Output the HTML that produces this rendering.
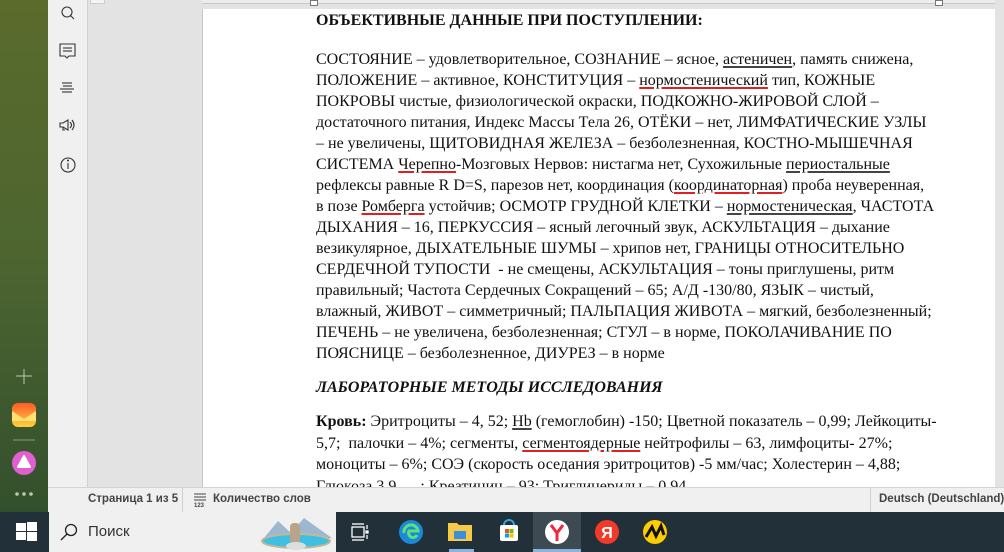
<!DOCTYPE html>
<html><head><meta charset="utf-8"><style>
*{margin:0;padding:0;box-sizing:border-box}
body{width:1004px;height:552px;overflow:hidden;position:relative;background:#e3e3e3;font-family:"Liberation Sans",sans-serif}
.green{position:absolute;left:0;top:0;width:48px;height:512px;background:linear-gradient(180deg,#5a6b2c 0%,#4d6530 50%,#33502d 100%)}
.side{position:absolute;left:48px;top:0;width:40px;height:487px;background:#f0f0f0;border-right:1px solid #d0d0d0}
.gray{position:absolute;left:88px;top:0;width:916px;height:487px;background:#e3e3e3}
.ruler{position:absolute;left:202px;top:0;width:793px;height:4px;background:#ececec;border-bottom:1px solid #c8c8c8}
.page{position:absolute;left:202px;top:9px;width:793px;height:478px;background:#fff;border-left:1px solid #c6c6c6;overflow:hidden}
.l{position:absolute;left:113px;white-space:nowrap;font-family:"Liberation Serif",serif;font-size:16px;color:#111;line-height:20px}
u{text-decoration:underline;text-decoration-color:#e02020;text-decoration-thickness:1.5px;text-underline-offset:2px}
u.k{text-decoration-color:#444}
.status{position:absolute;left:48px;top:487px;width:956px;height:25px;background:#f0f0f0;border-top:1px solid #d4d4d4;font-size:11.5px;font-weight:bold;color:#444;white-space:nowrap}
.task{position:absolute;left:0;top:512px;width:1004px;height:40px;background:#22303a}
.search{position:absolute;left:49px;top:0;width:287px;height:40px;background:#f0f0f0}
</style></head><body>
<div class="green"></div>
<div class="gray"></div>
<div class="side">
<svg width="40" height="190" style="position:absolute;left:0;top:0" fill="none" stroke="#333" stroke-width="1.1">
<circle cx="19" cy="12" r="5"/><line x1="22.5" y1="15.5" x2="26" y2="19"/>
<path d="M12 44h15v12h-6l-2 2-2-2h-5z"/><line x1="15" y1="48" x2="24" y2="48"/><line x1="15" y1="51" x2="24" y2="51"/>
<line x1="14" y1="83" x2="24" y2="83"/><line x1="15" y1="86" x2="24" y2="86"/><line x1="12" y1="89" x2="26" y2="89"/><line x1="14" y1="92" x2="24" y2="92"/>
<path d="M12 123h3l5-3v10l-5-3h-3z M15 127v3h2"/><path d="M22 122q3 3 0 6M24 120q4 5 0 10"/>
<circle cx="20" cy="165" r="7"/><line x1="20" y1="163" x2="20" y2="169"/><circle cx="20" cy="160.5" r=".5"/>
</svg>
</div>
<svg width="48" height="160" style="position:absolute;left:0;top:360">
<line x1="24" y1="9" x2="24" y2="24" stroke="#bcc8b0" stroke-width="1"/><line x1="16" y1="16" x2="32" y2="16" stroke="#bcc8b0"/>
<defs><linearGradient id="m" x1="0" y1="0" x2="0" y2="1"><stop offset="0" stop-color="#ff5a2a"/><stop offset="1" stop-color="#ffd23a"/></linearGradient></defs>
<rect x="12" y="43" width="24" height="24" rx="6" fill="url(#m)"/><path d="M12 51l12 8 12-8v10H12z" fill="#ffe070"/>
<line x1="13" y1="80" x2="35" y2="80" stroke="#8a9a80"/>
<circle cx="24" cy="103" r="12" fill="#e25fd0"/><path d="M24 96l6 11h-12z" fill="#fff" stroke="#fff" stroke-linejoin="round" stroke-width="2"/>
<circle cx="17" cy="134" r="1.8" fill="#bcc8b0"/><circle cx="24" cy="134" r="1.8" fill="#bcc8b0"/><circle cx="31" cy="134" r="1.8" fill="#bcc8b0"/>
</svg>
<div class="ruler"></div>
<div style="position:absolute;left:90px;top:0;width:15px;height:4px;border:1px solid #ccc;border-top:0;background:#f4f4f4"></div>
<div style="position:absolute;left:310px;top:0;width:8px;height:6px;border:1px solid #777;background:#fff"></div>
<div style="position:absolute;left:935px;top:0;width:8px;height:6px;border:1px solid #777;background:#fff"></div>
<div class="page">
<div class="l" style="top:2px;font-weight:bold">ОБЪЕКТИВНЫЕ ДАННЫЕ ПРИ ПОСТУПЛЕНИИ:</div>
<div class="l" style="top:41px">СОСТОЯНИЕ – удовлетворительное, СОЗНАНИЕ – ясное, <u class="k">астеничен</u>, память снижена,</div>
<div class="l" style="top:62px">ПОЛОЖЕНИЕ – активное, КОНСТИТУЦИЯ – <u>нормостенический</u> тип, КОЖНЫЕ</div>
<div class="l" style="top:83px">ПОКРОВЫ чистые, физиологической окраски, ПОДКОЖНО-ЖИРОВОЙ СЛОЙ –</div>
<div class="l" style="top:104px">достаточного питания, Индекс Массы Тела 26, ОТЁКИ – нет, ЛИМФАТИЧЕСКИЕ УЗЛЫ</div>
<div class="l" style="top:125px">– не увеличены, ЩИТОВИДНАЯ ЖЕЛЕЗА – безболезненная, КОСТНО-МЫШЕЧНАЯ</div>
<div class="l" style="top:146px">СИСТЕМА <u>Черепно</u>-Мозговых Нервов: нистагма нет, Сухожильные <u class="k">периостальные</u></div>
<div class="l" style="top:167px">рефлексы равные R D=S, парезов нет, координация (<u>координаторная</u>) проба неуверенная,</div>
<div class="l" style="top:188px">в позе <u>Ромберга</u> устойчив; ОСМОТР ГРУДНОЙ КЛЕТКИ – <u class="k">нормостеническая</u>, ЧАСТОТА</div>
<div class="l" style="top:209px">ДЫХАНИЯ – 16, ПЕРКУССИЯ – ясный легочный звук, АСКУЛЬТАЦИЯ – дыхание</div>
<div class="l" style="top:230px">везикулярное, ДЫХАТЕЛЬНЫЕ ШУМЫ – хрипов нет, ГРАНИЦЫ ОТНОСИТЕЛЬНО</div>
<div class="l" style="top:251px">СЕРДЕЧНОЙ ТУПОСТИ &nbsp;- не смещены, АСКУЛЬТАЦИЯ – тоны приглушены, ритм</div>
<div class="l" style="top:272px">правильный; Частота Сердечных Сокращений – 65; А/Д -130/80, ЯЗЫК – чистый,</div>
<div class="l" style="top:293px">влажный, ЖИВОТ – симметричный; ПАЛЬПАЦИЯ ЖИВОТА – мягкий, безболезненный;</div>
<div class="l" style="top:314px">ПЕЧЕНЬ – не увеличена, безболезненная; СТУЛ – в норме, ПОКОЛАЧИВАНИЕ ПО</div>
<div class="l" style="top:335px">ПОЯСНИЦЕ – безболезненное, ДИУРЕЗ – в норме</div>
<div class="l" style="top:369px;font-weight:bold;font-style:italic">ЛАБОРАТОРНЫЕ МЕТОДЫ ИССЛЕДОВАНИЯ</div>
<div class="l" style="top:403px"><b>Кровь:</b> Эритроциты – 4, 52; <u class="k">Hb</u> (гемоглобин) -150; Цветной показатель – 0,99; Лейкоциты-</div>
<div class="l" style="top:425px">5,7; &nbsp;палочки – 4%; сегменты, <u>сегментоядерные</u> нейтрофилы – 63, лимфоциты- 27%;</div>
<div class="l" style="top:446px">моноциты – 6%; СОЭ (скорость оседания эритроцитов) -5 мм/час; Холестерин – 4,88;</div>
<div class="l" style="top:468px">Глюкоза 3,9 &nbsp; &nbsp; &nbsp;; Креатинин – 93; Триглицериды – 0,94</div>
</div>
<div class="status">
<span style="position:absolute;left:40px;top:5px">Страница 1 из 5</span>
<div style="position:absolute;left:134px;top:0;height:25px;border-left:1px solid #d0d0d0"></div>
<svg width="14" height="16" style="position:absolute;left:145px;top:4px"><g stroke="#444"><line x1="1" y1="2" x2="13" y2="2"/><line x1="1" y1="5" x2="13" y2="5"/><line x1="1" y1="8" x2="13" y2="8"/></g><text x="1" y="15" font-size="6" fill="#444" font-family="Liberation Sans">123</text></svg>
<span style="position:absolute;left:165px;top:5px">Количество слов</span>
<div style="position:absolute;left:822px;top:0;height:25px;border-left:1px solid #d0d0d0"></div>
<span style="position:absolute;left:831px;top:5px">Deutsch (Deutschland)</span>
</div>
<div class="task">
<svg width="24" height="24" style="position:absolute;left:14px;top:8px" fill="#fff"><rect x="2" y="3" width="10" height="8"/><rect x="13" y="2" width="10" height="9"/><rect x="2" y="12" width="10" height="8"/><rect x="13" y="12" width="10" height="9"/></svg>
<div class="search">
<svg width="20" height="20" style="position:absolute;left:10px;top:10px" fill="none" stroke="#222" stroke-width="1.3"><circle cx="12" cy="8" r="5.5"/><line x1="8" y1="12" x2="2" y2="18"/></svg>
<span style="position:absolute;left:39px;top:11px;font-size:15px;color:#333">Поиск</span>
<svg width="80" height="38" style="position:absolute;left:207px;top:1px"><path d="M8 25L22 8L35 20L48 5L66 18L76 25z" fill="#9cb8d0"/><ellipse cx="40" cy="28" rx="34" ry="7" fill="#3fc0e0" stroke="#c9b69a" stroke-width="2"/><rect x="34" y="10" width="10" height="20" rx="4" fill="#b9a48a"/><ellipse cx="40" cy="33" rx="10" ry="4" fill="#ddd"/></svg>
</div>
<svg width="20" height="20" style="position:absolute;left:350px;top:10px" fill="none" stroke="#fff" stroke-width="1.3"><rect x="2" y="5" width="12" height="10"/><line x1="2" y1="2" x2="14" y2="2"/><line x1="2" y1="18" x2="14" y2="18"/><line x1="17" y1="3" x2="17" y2="7"/><rect x="16" y="9" width="2" height="2" fill="#fff"/><line x1="17" y1="13" x2="17" y2="17"/></svg>
<svg width="26" height="26" style="position:absolute;left:398px;top:7px"><circle cx="13" cy="13" r="12" fill="#1a8ad8"/><path d="M6 14a7 7 0 0 1 14-2h-9a4 4 0 0 0 8 4" fill="none" stroke="#5ee07a" stroke-width="3"/></svg>
<svg width="26" height="22" style="position:absolute;left:447px;top:9px"><path d="M1 2h9l2 2h13v16H1z" fill="#f7c948"/><rect x="7" y="10" width="12" height="8" fill="#3a8edb"/></svg>
<div style="position:absolute;left:449px;top:37px;width:25px;height:3px;background:#8ab4e0"></div>
<svg width="22" height="24" style="position:absolute;left:498px;top:7px"><path d="M6 6a5 5 0 0 1 10 0" fill="none" stroke="#35a7e0" stroke-width="2"/><rect x="2" y="6" width="18" height="16" rx="2" fill="#fff"/><rect x="7" y="10" width="4" height="4" fill="#f25022"/><rect x="11.5" y="10" width="4" height="4" fill="#7fba00"/><rect x="7" y="14.5" width="4" height="4" fill="#00a4ef"/><rect x="11.5" y="14.5" width="4" height="4" fill="#ffb900"/></svg>
<div style="position:absolute;left:533px;top:0;width:48px;height:40px;background:#3d4a52"></div>
<div style="position:absolute;left:533px;top:37px;width:48px;height:3px;background:#8ab4e0"></div>
<svg width="26" height="26" style="position:absolute;left:544px;top:7px"><circle cx="13" cy="13" r="12" fill="#fff"/><path d="M7 6l6 8 6-8M13 14v8" fill="none" stroke="#f2263a" stroke-width="3"/></svg>
<svg width="26" height="26" style="position:absolute;left:594px;top:7px"><circle cx="13" cy="13" r="12" fill="#f23a28"/><text x="13" y="19" font-size="16" font-weight="bold" fill="#fff" text-anchor="middle" font-family="Liberation Sans">Я</text></svg>
<svg width="26" height="26" style="position:absolute;left:642px;top:7px"><circle cx="13" cy="13" r="12" fill="#fc0"/><path d="M4 18L10 8l4 9 5-10 3 9" fill="none" stroke="#111" stroke-width="3"/></svg>
</div>
</body></html>
